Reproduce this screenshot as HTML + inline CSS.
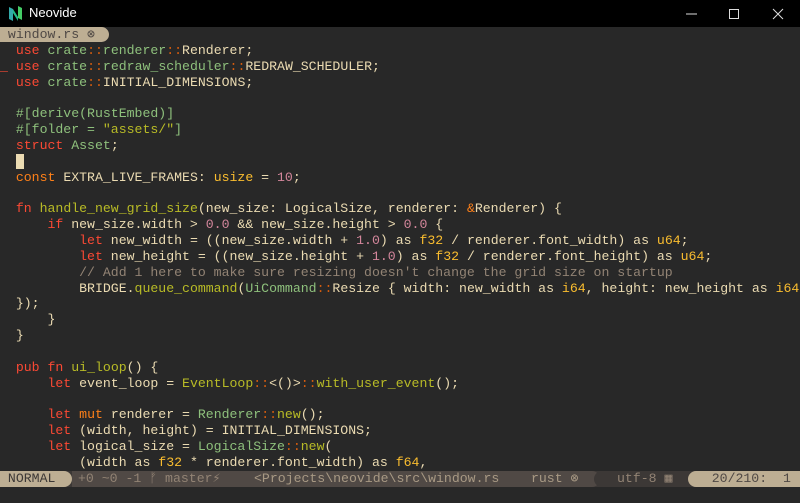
<!DOCTYPE html>
<html><head><meta charset="utf-8"><style>
html,body{margin:0;padding:0;width:800px;height:503px;overflow:hidden;background:#282828;}
#title{position:absolute;left:0;top:0;width:800px;height:27px;background:#000;}
#title .name{position:absolute;left:29px;top:5px;color:#fff;font:13px "Liberation Sans",sans-serif;}
#code{position:absolute;left:0;top:27px;margin:0;font:13.2px/15.85px "Liberation Mono",monospace;color:#ebdbb2;white-space:pre;}
.r{color:#fb4934}.a{color:#8ec07c}.y{color:#fabd2f}.g{color:#b8bb26}.o{color:#fe8019}.p{color:#d3869b}.c{color:#928374}.d{color:#d65d0e}
.tab{background:#bdae93;color:#504945;border-radius:0 8px 8px 0;padding-right:6px}
.cur{background:#ebdbb2}
.st{position:absolute;left:0;top:471px;width:800px;height:16px;background:#3c3836;font:13.2px/16px "Liberation Mono",monospace;color:#a89984;white-space:pre;}
.st span{position:absolute;top:0;height:16px}
</style></head><body>
<div id="title">
<svg style="position:absolute;left:8px;top:5px" width="15" height="17" viewBox="0 0 15 17"><path d="M1 2 L5 4 L5 16 L1 14Z" fill="#3aa"/><path d="M5 4 L10 12 L10 16 L5 8Z" fill="#2b8"/><path d="M10 1 L14 3 L14 15 L10 13Z" fill="#4c6"/></svg>
<span class="name">Neovide</span>
<svg style="position:absolute;left:680px;top:6px" width="110" height="16"><line x1="6" y1="8" x2="17" y2="8" stroke="#ddd"/><rect x="49.5" y="3.5" width="9" height="9" fill="none" stroke="#ddd"/><path d="M93 3 L103 13 M103 3 L93 13" stroke="#ddd"/></svg>
</div>
<pre id="code"><span class="tab"> window.rs ⊗ </span>
  <span class="r">use</span> <span class="a">crate</span><span class="d">::</span><span class="a">renderer</span><span class="d">::</span>Renderer;
<span class="r">_</span> <span class="r">use</span> <span class="a">crate</span><span class="d">::</span><span class="a">redraw_scheduler</span><span class="d">::</span>REDRAW_SCHEDULER;
  <span class="r">use</span> <span class="a">crate</span><span class="d">::</span>INITIAL_DIMENSIONS;

  <span class="a">#[derive(RustEmbed)]</span>
  <span class="a">#[folder = </span><span class="g">"assets/"</span><span class="a">]</span>
  <span class="r">struct</span> <span class="a">Asset</span>;
  <span class="cur"> </span>
  <span class="o">const</span> EXTRA_LIVE_FRAMES: <span class="y">usize</span> = <span class="p">10</span>;

  <span class="r">fn</span> <span class="g">handle_new_grid_size</span>(new_size: LogicalSize, renderer: <span class="o">&amp;</span>Renderer) {
      <span class="r">if</span> new_size.width &gt; <span class="p">0.0</span> &amp;&amp; new_size.height &gt; <span class="p">0.0</span> {
          <span class="r">let</span> new_width = ((new_size.width + <span class="p">1.0</span>) as <span class="y">f32</span> / renderer.font_width) as <span class="y">u64</span>;
          <span class="r">let</span> new_height = ((new_size.height + <span class="p">1.0</span>) as <span class="y">f32</span> / renderer.font_height) as <span class="y">u64</span>;
          <span class="c">// Add 1 here to make sure resizing doesn't change the grid size on startup</span>
          BRIDGE.<span class="g">queue_command</span>(<span class="a">UiCommand</span><span class="d">::</span>Resize { width: new_width as <span class="y">i64</span>, height: new_height as <span class="y">i64</span>
  });
      }
  }

  <span class="r">pub</span> <span class="r">fn</span> <span class="g">ui_loop</span>() {
      <span class="r">let</span> event_loop = <span class="g">EventLoop</span><span class="d">::</span>&lt;()&gt;<span class="d">::</span><span class="g">with_user_event</span>();

      <span class="r">let</span> <span class="o">mut</span> renderer = <span class="a">Renderer</span><span class="d">::</span><span class="g">new</span>();
      <span class="r">let</span> (width, height) = INITIAL_DIMENSIONS;
      <span class="r">let</span> logical_size = <span class="a">LogicalSize</span><span class="d">::</span><span class="g">new</span>(
          (width as <span class="y">f32</span> * renderer.font_width) as <span class="y">f64</span>,</pre>
<div class="st">
<span style="left:0;width:72px;background:#bdae93;color:#3c3836;border-radius:0 8px 8px 0"> NORMAL</span>
<span style="left:72px;width:170px;background:#504945;color:#a89984;z-index:-0"></span>
<span style="left:78px;color:#928374">+0 ~0 -1 ᚠ master⚡</span>
<span style="left:242px;width:358px;background:#504945;border-radius:0 8px 8px 0"></span>
<span style="left:254px;color:#a89984">&lt;Projects\neovide\src\window.rs    rust ⊗</span>
<span style="left:594px;width:100px;background:#3c3836;border-radius:8px 0 0 8px"></span>
<span style="left:617px;color:#928374">utf-8 ▦</span>
<span style="left:688px;width:112px;background:#bdae93;color:#504945;border-radius:8px 0 0 8px">   20/210:  1</span>
</div>
</body></html>
